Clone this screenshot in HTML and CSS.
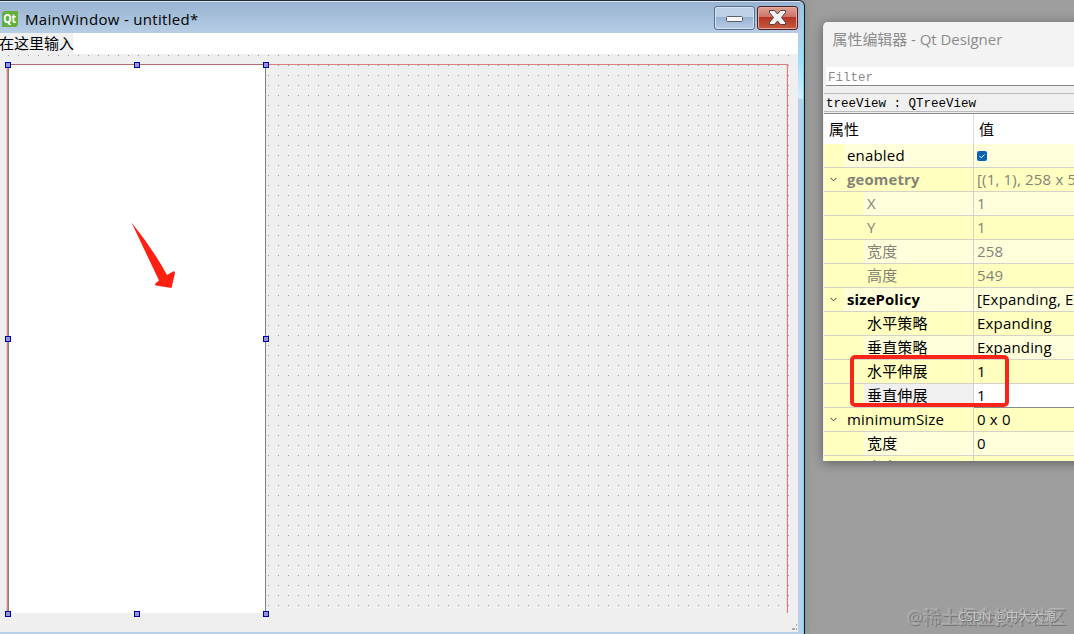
FILE: index.html
```
<!DOCTYPE html>
<html lang="zh-CN">
<head>
<meta charset="utf-8">
<title>Qt Designer</title>
<link rel="stylesheet" href="styles.css">
</head>
<body>
<main class="desktop">
  <section class="window">
    <header class="titlebar">
      <svg class="qt" width="16" height="16" viewBox="0 0 16 16"><path d="M2 0H16V14L14 16H0V2Z" fill="#65b03c"/><text x="1.2" y="12.3" textLength="13" lengthAdjust="spacingAndGlyphs">Qt</text></svg>
      <h1 class="title">MainWindow - untitled*</h1>
      <div class="buttons">
        <button class="btn"><svg width="39" height="22" viewBox="0 0 39 22"><rect x="11.5" y="9.5" width="16" height="5" rx="1" fill="#f8f8f8" stroke="#5b5f6b"/></svg></button>
        <button class="btn close"><svg width="39" height="22" viewBox="0 0 39 22"><path d="M11.5 3.5H16.5L19.5 7L22.5 3.5H27.5V5.5L23.5 10.5L27.5 15.5V17.5H22.5L19.5 14L16.5 17.5H11.5V15.5L15.5 10.5L11.5 5.5Z" fill="#f4f3f3" stroke="#53404b" stroke-linejoin="round"/></svg></button>
      </div>
    </header>
    <nav class="menubar"><span class="menu-hint">在这里输入</span></nav>
    <div class="form">
      <div class="layout"></div>
      <div class="tree"></div>
      <i class="handle l t"></i><i class="handle c t"></i><i class="handle r t"></i>
      <i class="handle l m"></i><i class="handle r m"></i>
      <i class="handle l b"></i><i class="handle c b"></i><i class="handle r b"></i>
      <svg class="arrow" width="46" height="68" viewBox="0 0 46 68"><path d="M.5 .5Q22 27 36 53L42 49.500Q44 48.500 44 51L40.500 66L25 63.500Q23 62.500 25 61L28 58.500Z" fill="#ff2011"/></svg>
      <svg class="grip" width="6" height="8" viewBox="0 0 6 8"><path d="M4 1h1v2H4zM0 5h3v2H0zM4 5h1v2H4z" fill="#aaa"/></svg>
    </div>
  </section>

  <section class="panel">
    <h2 class="panel-title">属性编辑器 - Qt Designer</h2>
    <div class="filter">Filter</div>
    <div class="object">treeView : QTreeView</div>
    <div class="grid">
      <div class="head"><span>属性</span><span>值</span></div>
      <div class="row"><div class="name"><i></i><b>enabled</b></div><div class="val"><svg width="10" height="10" viewBox="0 0 10 10"><rect width="10" height="10" rx="2" fill="#0863b5"/><path d="M2.5 5L4.3 6.800L7.600 3.500" fill="none" stroke="#fff"/></svg></div></div>
      <div class="row alt dim strong"><div class="name"><i><svg width="7" height="5" viewBox="0 0 7 5"><path d="M.5 .8L3.5 3.8L6.5 .8"/></svg></i><b>geometry</b></div><div class="val">[(1, 1), 258 x 549]</div></div>
      <div class="row sub dim"><div class="name"><i></i><b>X</b></div><div class="val">1</div></div>
      <div class="row sub alt dim"><div class="name"><i></i><b>Y</b></div><div class="val">1</div></div>
      <div class="row sub dim"><div class="name"><i></i><b>宽度</b></div><div class="val">258</div></div>
      <div class="row sub alt dim"><div class="name"><i></i><b>高度</b></div><div class="val">549</div></div>
      <div class="row strong"><div class="name"><i><svg width="7" height="5" viewBox="0 0 7 5"><path d="M.5 .8L3.5 3.8L6.5 .8"/></svg></i><b>sizePolicy</b></div><div class="val">[Expanding, Expanding]</div></div>
      <div class="row sub alt"><div class="name"><i></i><b>水平策略</b></div><div class="val">Expanding</div></div>
      <div class="row sub"><div class="name"><i></i><b>垂直策略</b></div><div class="val">Expanding</div></div>
      <div class="row sub alt"><div class="name"><i></i><b>水平伸展</b></div><div class="val">1</div></div>
      <div class="row sub selected"><div class="name"><i></i><b>垂直伸展</b></div><div class="val">1</div></div>
      <div class="row alt"><div class="name"><i><svg width="7" height="5" viewBox="0 0 7 5"><path d="M.5 .8L3.5 3.8L6.5 .8"/></svg></i><b>minimumSize</b></div><div class="val">0 x 0</div></div>
      <div class="row sub"><div class="name"><i></i><b>宽度</b></div><div class="val">0</div></div>
      <div class="row sub alt"><div class="name"><i></i><b>高度</b></div><div class="val"></div></div>
    </div>
  </section>
  <div class="marker"></div>
  <div class="mark community">@稀土掘金技术社区</div>
  <div class="mark author">CSDN @中大大源</div>
</main>
</body>
</html>
```
FILE: styles.css
```
* { box-sizing: border-box; }
body { margin: 0; }
.desktop {
  position: relative;
  display: flex;
  align-items: flex-start;
  gap: 18px;
  width: 1074px;
  height: 634px;
  overflow: hidden;
  background: #9e9e9e;
  color: #000;
  font: 15px/24px "Open Sans", "Noto Sans CJK SC", sans-serif;
}
.window {
  flex: none;
  display: flex;
  flex-direction: column;
  width: 805px;
  height: 634px;
  padding-right: 4px;
  border-top: 1px solid #222832;
  border-right: 1px solid #14181d;
  border-top-right-radius: 6px;
  background: linear-gradient(90deg, transparent 803px, #6bdcf5 803px), linear-gradient(#a4bfdd 0, #b4cce4 30px, #a6ddf5 60px, #d4f1fc 97px, #b9d1e8 98px);
  box-shadow: 0 0 10px #77777780;
}
.titlebar {
  display: flex;
  flex: none;
  height: 32px;
  padding-left: 2px;
  border-top: 1px solid #dae6f3;
  background: linear-gradient(#98b3d1, #b7cde5);
}
.qt { flex: none; margin-top: 9px; }
.qt text { fill: #fff; font: bold 12px "Open Sans", sans-serif; }
.title { margin: 5px 0 0 7px; font-size: 15px; font-weight: 400; line-height: 25px; letter-spacing: .32px; white-space: nowrap; }
.buttons { display: flex; gap: 2px; margin: 4px 2px 0 auto; }
.btn {
  width: 41px;
  height: 24px;
  padding: 0;
  border: 1px solid #566e8b;
  border-radius: 3px;
  background: linear-gradient(#bdd0e6 0 45%, #99b2d0 46%, #b5cce4);
  box-shadow: inset 0 0 0 1px #d5e3f2;
}
.btn svg { display: block; }
.btn.close { border-color: #4b2025; background: linear-gradient(#dfa092, #cc7467 45%, #b53323 46%, #c65c3e); box-shadow: inset 0 0 0 1px #e4aaa0; }
.menubar { flex: none; width: 798px; height: 21px; background: #fff; }
.menu-hint { display: block; width: 74px; height: 21px; margin-left: -1px; background: #f0f0f0; line-height: 21px; white-space: nowrap; }
.form {
  position: relative;
  flex: none;
  width: 798px;
  height: 578px;
  background: #efefef;
}
.form::before {
  content: "";
  position: absolute;
  left: 8px;
  top: 1px;
  width: 781px;
  height: 551px;
  background: conic-gradient(from 270deg at 1px 1px, #999 90deg, transparent 0) 0 0 / 10px 10px;
}
.layout { position: absolute; left: 7px; top: 10px; width: 781px; height: 549px; border: 1px solid #df7c7e; border-bottom: 0; box-shadow: inset -1px 0 #f8d8dc, -1px 0 #f3c9c6; }
.tree { position: absolute; left: 8px; top: 10px; width: 258px; height: 549px; border: 1px solid #808087; border-top-color: #b56a70; border-bottom: 0; background: #fff; }
.handle { position: absolute; width: 6px; height: 6px; border: 1px solid #0000a8; background: #9494d9; }
.l { left: 5px; } .c { left: 134px; } .r { left: 263px; }
.t { top: 8px; } .m { top: 282px; } .b { top: 557px; }
.arrow { position: absolute; left: 131px; top: 168px; }
.grip { position: absolute; right: 0; bottom: 1px; }
.panel {
  flex: none;
  display: flex;
  flex-direction: column;
  width: 300px;
  height: 439px;
  margin-top: 22px;
  padding-left: 1px;
  overflow: hidden;
  border-top-left-radius: 5px;
  background: #f0f0f0;
  box-shadow: 0 2px 12px #0006;
}
.panel-title { flex: none; height: 45px; margin: 0; padding: 5px 0 0 8.5px; color: #8b8b8b; background: #f3f3f3; font-size: 15px; font-weight: 400; line-height: 25px; letter-spacing: -.05px; }
.filter, .object { flex: none; font: 12.5px/19px "Liberation Mono", monospace; }
.filter { height: 19px; margin-left: 2px; padding: 3px 0 0 2px; border-bottom: 1px solid #888; background: #fff; color: #8b8b8b; line-height: 17px; }
.object { height: 19px; margin-top: 7px; padding: 1px 0 0 2px; border: 1px solid #bbb; border-left: 0; }
.grid { border-top: 1px solid #888; background: #fff; margin-top: 1px; }
.head, .row { display: grid; grid-template-columns: 150px 1fr; white-space: nowrap; }
.head { height: 30px; line-height: 31px; }
.head span { padding-left: 5px; }
.head span + span { border-left: 1px solid #ddd; margin-left: -1px; }
.row { grid-template-rows: 24px; height: 24px; background: #ffffdc; line-height: 23px; letter-spacing: .18px; }
.row.alt { background: #ffffbf; }
.name { display: flex; border-right: 1px solid #d3d3c9; border-bottom: 1px solid #d3d3c9; }
.name i { display: flex; flex: none; align-items: center; justify-content: center; width: 20px; padding-right: 1px; background: #ffffbf; }
.name i path { fill: none; stroke: #333; }
.name b { padding-left: 3px; font-weight: 400; }
.strong b { font-weight: 700; font-size: 14.8px; }
.sub .name i { width: 40px; }
.val { display: flex; align-items: center; padding-left: 3px; border-bottom: 1px solid #d3d3c9; }
.dim { color: #838378; }
.selected { background: #fff; }
.selected .name { background: #f0f0f0; }
.selected .val { border-bottom-color: #888; }
.marker { position: absolute; left: 850px; top: 355px; width: 159px; height: 52px; border: 4px solid #fa2419; border-radius: 5px; }
.mark { position: absolute; white-space: nowrap; }
.community { left: 907px; top: 604px; color: #a3a3a3; font-size: 17.9px; line-height: 26px; text-shadow: 1px 1px #777, -1px -1px #b2b2b2; }
.author { left: 958px; top: 605px; color: #c9c9c9; font-size: 12.5px; text-shadow: 1px 1px #777; }
```
